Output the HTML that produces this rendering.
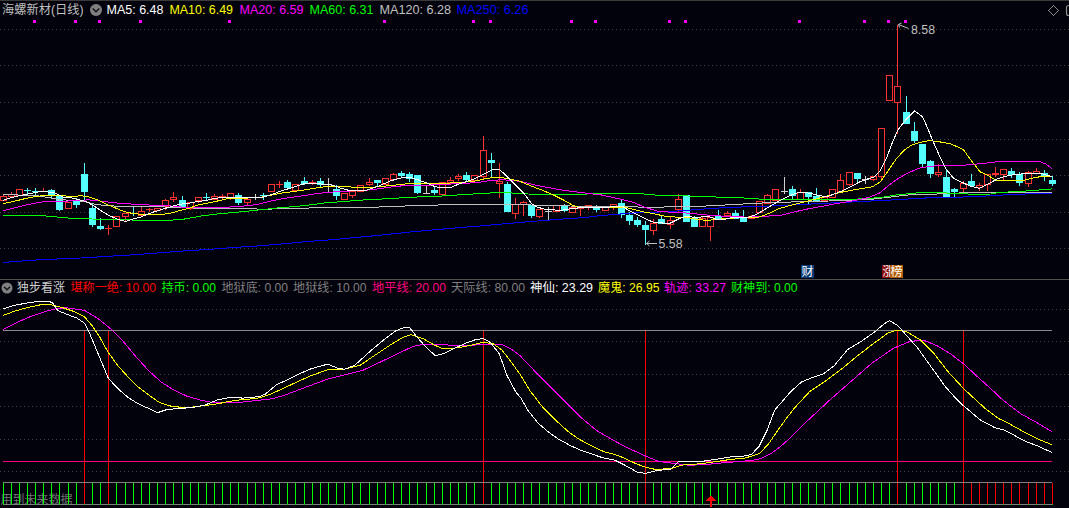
<!DOCTYPE html>
<html lang="zh-CN"><head><meta charset="utf-8"><title>海螺新材(日线)</title>
<style>html,body{margin:0;padding:0;background:#02020c;overflow:hidden}svg{display:block}text{font-family:"Liberation Sans","Noto Sans CJK SC",sans-serif;font-size:12px}.ma{fill:none;stroke-width:1;shape-rendering:crispEdges}.c{shape-rendering:crispEdges}</style></head><body>
<svg width="1069" height="508" viewBox="0 0 1069 508">
<rect width="1069" height="508" fill="#02020c"/>
<rect x="0" y="0" width="1069" height="1" fill="#3a3a3a" class="c"/>
<line x1="0" y1="29.5" x2="1069" y2="29.5" stroke="#404040" stroke-width="1" stroke-dasharray="1 3" class="c"/>
<line x1="0" y1="65.5" x2="1069" y2="65.5" stroke="#404040" stroke-width="1" stroke-dasharray="1 3" class="c"/>
<line x1="0" y1="102.5" x2="1069" y2="102.5" stroke="#404040" stroke-width="1" stroke-dasharray="1 3" class="c"/>
<line x1="0" y1="139.5" x2="1069" y2="139.5" stroke="#404040" stroke-width="1" stroke-dasharray="1 3" class="c"/>
<line x1="0" y1="175.5" x2="1069" y2="175.5" stroke="#404040" stroke-width="1" stroke-dasharray="1 3" class="c"/>
<line x1="0" y1="212.5" x2="1069" y2="212.5" stroke="#404040" stroke-width="1" stroke-dasharray="1 3" class="c"/>
<line x1="0" y1="248.5" x2="1069" y2="248.5" stroke="#404040" stroke-width="1" stroke-dasharray="1 3" class="c"/>
<line x1="0" y1="309.5" x2="1069" y2="309.5" stroke="#404040" stroke-width="1" stroke-dasharray="1 3" class="c"/>
<line x1="0" y1="341.5" x2="1069" y2="341.5" stroke="#404040" stroke-width="1" stroke-dasharray="1 3" class="c"/>
<line x1="0" y1="374.5" x2="1069" y2="374.5" stroke="#404040" stroke-width="1" stroke-dasharray="1 3" class="c"/>
<line x1="0" y1="406.5" x2="1069" y2="406.5" stroke="#404040" stroke-width="1" stroke-dasharray="1 3" class="c"/>
<line x1="0" y1="439.5" x2="1069" y2="439.5" stroke="#404040" stroke-width="1" stroke-dasharray="1 3" class="c"/>
<line x1="0" y1="471.5" x2="1069" y2="471.5" stroke="#404040" stroke-width="1" stroke-dasharray="1 3" class="c"/>
<rect x="0" y="279" width="1069" height="1" fill="#505050" class="c"/>
<rect x="33" y="20" width="3" height="3" fill="#ff00ff" class="c"/>
<rect x="74" y="20" width="3" height="3" fill="#ff00ff" class="c"/>
<rect x="98" y="20" width="3" height="3" fill="#ff00ff" class="c"/>
<rect x="139" y="20" width="3" height="3" fill="#ff00ff" class="c"/>
<rect x="228" y="20" width="3" height="3" fill="#ff00ff" class="c"/>
<rect x="383" y="20" width="3" height="3" fill="#ff00ff" class="c"/>
<rect x="472" y="20" width="3" height="3" fill="#ff00ff" class="c"/>
<rect x="489" y="20" width="3" height="3" fill="#ff00ff" class="c"/>
<rect x="570" y="20" width="3" height="3" fill="#ff00ff" class="c"/>
<rect x="594" y="20" width="3" height="3" fill="#ff00ff" class="c"/>
<rect x="668" y="20" width="3" height="3" fill="#ff00ff" class="c"/>
<rect x="684" y="20" width="3" height="3" fill="#ff00ff" class="c"/>
<rect x="798" y="20" width="3" height="3" fill="#ff00ff" class="c"/>
<rect x="863" y="20" width="3" height="3" fill="#ff00ff" class="c"/>
<rect x="887" y="20" width="3" height="3" fill="#ff00ff" class="c"/>
<rect x="904" y="20" width="3" height="3" fill="#ff00ff" class="c"/>
<g class="c">
<rect x="3" y="195" width="1" height="1" fill="#ff3232"/>
<rect x="0.5" y="196.5" width="6" height="4" fill="#02020c" stroke="#ff3232" stroke-width="1"/>
<rect x="11" y="192" width="1" height="2" fill="#ff3232"/>
<rect x="8.5" y="194.5" width="6" height="2" fill="#02020c" stroke="#ff3232" stroke-width="1"/>
<rect x="16.5" y="189.5" width="6" height="6" fill="#02020c" stroke="#ff3232" stroke-width="1"/>
<rect x="24" y="190" width="7" height="1" fill="#54ffff"/>
<rect x="27" y="188" width="1" height="6" fill="#54ffff"/>
<rect x="32" y="191" width="7" height="1" fill="#54ffff"/>
<rect x="35" y="188" width="1" height="9" fill="#54ffff"/>
<rect x="40" y="191" width="7" height="1" fill="#ff3232"/>
<rect x="43" y="188" width="1" height="4" fill="#ff3232"/>
<rect x="51" y="189" width="1" height="9" fill="#54ffff"/>
<rect x="48" y="190" width="7" height="5" fill="#54ffff"/>
<rect x="59" y="196" width="1" height="15" fill="#54ffff"/>
<rect x="56" y="196" width="7" height="14" fill="#54ffff"/>
<rect x="65.5" y="202.5" width="6" height="6" fill="#02020c" stroke="#ff3232" stroke-width="1"/>
<rect x="76" y="198" width="1" height="10" fill="#54ffff"/>
<rect x="73" y="201" width="7" height="4" fill="#54ffff"/>
<rect x="84" y="163" width="1" height="37" fill="#54ffff"/>
<rect x="81" y="174" width="7" height="18" fill="#54ffff"/>
<rect x="92" y="204" width="1" height="23" fill="#54ffff"/>
<rect x="89" y="208" width="7" height="17" fill="#54ffff"/>
<rect x="100" y="218" width="1" height="12" fill="#54ffff"/>
<rect x="97" y="226" width="7" height="3" fill="#54ffff"/>
<rect x="105" y="228" width="7" height="1" fill="#ff3232"/>
<rect x="108" y="225" width="1" height="10" fill="#ff3232"/>
<rect x="113.5" y="216.5" width="6" height="10" fill="#02020c" stroke="#ff3232" stroke-width="1"/>
<rect x="125" y="217" width="1" height="5" fill="#ff3232"/>
<rect x="122.5" y="213.5" width="6" height="3" fill="#02020c" stroke="#ff3232" stroke-width="1"/>
<rect x="130" y="213" width="7" height="1" fill="#54ffff"/>
<rect x="133" y="207" width="1" height="9" fill="#54ffff"/>
<rect x="141" y="207" width="1" height="4" fill="#ff3232"/>
<rect x="138.5" y="211.5" width="6" height="4" fill="#02020c" stroke="#ff3232" stroke-width="1"/>
<rect x="146" y="209" width="7" height="1" fill="#ff3232"/>
<rect x="149" y="208" width="1" height="4" fill="#ff3232"/>
<rect x="154.5" y="208.5" width="6" height="2" fill="#02020c" stroke="#ff3232" stroke-width="1"/>
<rect x="165" y="199" width="1" height="1" fill="#ff3232"/>
<rect x="165" y="207" width="1" height="3" fill="#ff3232"/>
<rect x="162.5" y="200.5" width="6" height="6" fill="#02020c" stroke="#ff3232" stroke-width="1"/>
<rect x="173" y="192" width="1" height="5" fill="#ff3232"/>
<rect x="173" y="200" width="1" height="2" fill="#ff3232"/>
<rect x="170.5" y="197.5" width="6" height="2" fill="#02020c" stroke="#ff3232" stroke-width="1"/>
<rect x="182" y="196" width="1" height="12" fill="#54ffff"/>
<rect x="179" y="200" width="7" height="7" fill="#54ffff"/>
<rect x="190" y="209" width="1" height="1" fill="#ff3232"/>
<rect x="187.5" y="202.5" width="6" height="6" fill="#02020c" stroke="#ff3232" stroke-width="1"/>
<rect x="198" y="201" width="1" height="2" fill="#ff3232"/>
<rect x="195.5" y="197.5" width="6" height="3" fill="#02020c" stroke="#ff3232" stroke-width="1"/>
<rect x="203" y="197" width="7" height="1" fill="#54ffff"/>
<rect x="206" y="193" width="1" height="7" fill="#54ffff"/>
<rect x="214" y="194" width="1" height="2" fill="#ff3232"/>
<rect x="211.5" y="196.5" width="6" height="3" fill="#02020c" stroke="#ff3232" stroke-width="1"/>
<rect x="222" y="194" width="1" height="2" fill="#ff3232"/>
<rect x="222" y="198" width="1" height="1" fill="#ff3232"/>
<rect x="219.5" y="196.5" width="6" height="1" fill="#02020c" stroke="#ff3232" stroke-width="1"/>
<rect x="230" y="198" width="1" height="2" fill="#ff3232"/>
<rect x="227.5" y="193.5" width="6" height="4" fill="#02020c" stroke="#ff3232" stroke-width="1"/>
<rect x="238" y="193" width="1" height="12" fill="#54ffff"/>
<rect x="235" y="195" width="7" height="8" fill="#54ffff"/>
<rect x="247" y="203" width="1" height="2" fill="#ff3232"/>
<rect x="244.5" y="199.5" width="6" height="3" fill="#02020c" stroke="#ff3232" stroke-width="1"/>
<rect x="252" y="197" width="7" height="1" fill="#d0d0d0"/>
<rect x="255" y="194" width="1" height="6" fill="#d0d0d0"/>
<rect x="260" y="195" width="7" height="1" fill="#54ffff"/>
<rect x="263" y="193" width="1" height="7" fill="#54ffff"/>
<rect x="268.5" y="184.5" width="6" height="7" fill="#02020c" stroke="#ff3232" stroke-width="1"/>
<rect x="276" y="184" width="7" height="1" fill="#ff3232"/>
<rect x="279" y="181" width="1" height="7" fill="#ff3232"/>
<rect x="287" y="180" width="1" height="10" fill="#54ffff"/>
<rect x="284" y="182" width="7" height="6" fill="#54ffff"/>
<rect x="292.5" y="184.5" width="6" height="6" fill="#02020c" stroke="#ff3232" stroke-width="1"/>
<rect x="304" y="177" width="1" height="8" fill="#54ffff"/>
<rect x="301" y="181" width="7" height="3" fill="#54ffff"/>
<rect x="309" y="182" width="7" height="1" fill="#ff3232"/>
<rect x="312" y="180" width="1" height="5" fill="#ff3232"/>
<rect x="320" y="178" width="1" height="9" fill="#54ffff"/>
<rect x="317" y="181" width="7" height="4" fill="#54ffff"/>
<rect x="325" y="184" width="7" height="1" fill="#d0d0d0"/>
<rect x="328" y="178" width="1" height="15" fill="#d0d0d0"/>
<rect x="336" y="185" width="1" height="15" fill="#54ffff"/>
<rect x="333" y="189" width="7" height="7" fill="#54ffff"/>
<rect x="341.5" y="193.5" width="6" height="6" fill="#02020c" stroke="#ff3232" stroke-width="1"/>
<rect x="352" y="196" width="1" height="2" fill="#ff3232"/>
<rect x="349.5" y="191.5" width="6" height="4" fill="#02020c" stroke="#ff3232" stroke-width="1"/>
<rect x="357.5" y="185.5" width="6" height="6" fill="#02020c" stroke="#ff3232" stroke-width="1"/>
<rect x="369" y="178" width="1" height="4" fill="#ff3232"/>
<rect x="369" y="185" width="1" height="1" fill="#ff3232"/>
<rect x="366.5" y="182.5" width="6" height="2" fill="#02020c" stroke="#ff3232" stroke-width="1"/>
<rect x="377" y="180" width="1" height="6" fill="#54ffff"/>
<rect x="374" y="180" width="7" height="3" fill="#54ffff"/>
<rect x="382.5" y="178.5" width="6" height="6" fill="#02020c" stroke="#ff3232" stroke-width="1"/>
<rect x="393" y="173" width="1" height="1" fill="#ff3232"/>
<rect x="390.5" y="174.5" width="6" height="5" fill="#02020c" stroke="#ff3232" stroke-width="1"/>
<rect x="401" y="171" width="1" height="7" fill="#54ffff"/>
<rect x="398" y="173" width="7" height="3" fill="#54ffff"/>
<rect x="409" y="172" width="1" height="10" fill="#54ffff"/>
<rect x="406" y="174" width="7" height="5" fill="#54ffff"/>
<rect x="417" y="175" width="1" height="19" fill="#54ffff"/>
<rect x="414" y="175" width="7" height="18" fill="#54ffff"/>
<rect x="423" y="193" width="7" height="1" fill="#d0d0d0"/>
<rect x="426" y="185" width="1" height="9" fill="#d0d0d0"/>
<rect x="434" y="186" width="1" height="9" fill="#54ffff"/>
<rect x="431" y="190" width="7" height="3" fill="#54ffff"/>
<rect x="439.5" y="182.5" width="6" height="12" fill="#02020c" stroke="#ff3232" stroke-width="1"/>
<rect x="450" y="177" width="1" height="3" fill="#ff3232"/>
<rect x="450" y="183" width="1" height="2" fill="#ff3232"/>
<rect x="447.5" y="180.5" width="6" height="2" fill="#02020c" stroke="#ff3232" stroke-width="1"/>
<rect x="458" y="174" width="1" height="2" fill="#ff3232"/>
<rect x="458" y="179" width="1" height="2" fill="#ff3232"/>
<rect x="455.5" y="176.5" width="6" height="2" fill="#02020c" stroke="#ff3232" stroke-width="1"/>
<rect x="466" y="172" width="1" height="10" fill="#54ffff"/>
<rect x="463" y="175" width="7" height="5" fill="#54ffff"/>
<rect x="474" y="181" width="1" height="2" fill="#ff3232"/>
<rect x="471.5" y="175.5" width="6" height="5" fill="#02020c" stroke="#ff3232" stroke-width="1"/>
<rect x="483" y="136" width="1" height="14" fill="#ff3232"/>
<rect x="483" y="177" width="1" height="3" fill="#ff3232"/>
<rect x="480.5" y="150.5" width="6" height="26" fill="#02020c" stroke="#ff3232" stroke-width="1"/>
<rect x="491" y="153" width="1" height="24" fill="#54ffff"/>
<rect x="488" y="160" width="7" height="3" fill="#54ffff"/>
<rect x="499" y="163" width="1" height="18" fill="#ff3232"/>
<rect x="499" y="184" width="1" height="14" fill="#ff3232"/>
<rect x="496.5" y="181.5" width="6" height="2" fill="#02020c" stroke="#ff3232" stroke-width="1"/>
<rect x="507" y="182" width="1" height="30" fill="#54ffff"/>
<rect x="504" y="184" width="7" height="28" fill="#54ffff"/>
<rect x="515" y="198" width="1" height="6" fill="#ff3232"/>
<rect x="515" y="214" width="1" height="5" fill="#ff3232"/>
<rect x="512.5" y="204.5" width="6" height="9" fill="#02020c" stroke="#ff3232" stroke-width="1"/>
<rect x="523" y="201" width="1" height="1" fill="#ff3232"/>
<rect x="523" y="205" width="1" height="11" fill="#ff3232"/>
<rect x="520.5" y="202.5" width="6" height="2" fill="#02020c" stroke="#ff3232" stroke-width="1"/>
<rect x="531" y="205" width="1" height="13" fill="#54ffff"/>
<rect x="528" y="205" width="7" height="11" fill="#54ffff"/>
<rect x="539" y="217" width="1" height="1" fill="#ff3232"/>
<rect x="536.5" y="209.5" width="6" height="7" fill="#02020c" stroke="#ff3232" stroke-width="1"/>
<rect x="545" y="211" width="7" height="1" fill="#d0d0d0"/>
<rect x="548" y="207" width="1" height="13" fill="#d0d0d0"/>
<rect x="553.5" y="205.5" width="6" height="6" fill="#02020c" stroke="#ff3232" stroke-width="1"/>
<rect x="564" y="204" width="1" height="8" fill="#54ffff"/>
<rect x="561" y="205" width="7" height="6" fill="#54ffff"/>
<rect x="569.5" y="207.5" width="6" height="5" fill="#02020c" stroke="#ff3232" stroke-width="1"/>
<rect x="577" y="208" width="7" height="1" fill="#ff3232"/>
<rect x="580" y="208" width="1" height="8" fill="#ff3232"/>
<rect x="588" y="208" width="1" height="2" fill="#ff3232"/>
<rect x="585.5" y="205.5" width="6" height="2" fill="#02020c" stroke="#ff3232" stroke-width="1"/>
<rect x="596" y="205" width="1" height="7" fill="#54ffff"/>
<rect x="593" y="207" width="7" height="3" fill="#54ffff"/>
<rect x="602.5" y="206.5" width="6" height="4" fill="#02020c" stroke="#ff3232" stroke-width="1"/>
<rect x="613" y="207" width="1" height="3" fill="#ff3232"/>
<rect x="610.5" y="204.5" width="6" height="2" fill="#02020c" stroke="#ff3232" stroke-width="1"/>
<rect x="621" y="199" width="1" height="19" fill="#54ffff"/>
<rect x="618" y="203" width="7" height="12" fill="#54ffff"/>
<rect x="629" y="212" width="1" height="13" fill="#54ffff"/>
<rect x="626" y="215" width="7" height="6" fill="#54ffff"/>
<rect x="637" y="217" width="1" height="10" fill="#54ffff"/>
<rect x="634" y="220" width="7" height="5" fill="#54ffff"/>
<rect x="645" y="221" width="1" height="24" fill="#54ffff"/>
<rect x="642" y="225" width="7" height="5" fill="#54ffff"/>
<rect x="653" y="219" width="1" height="4" fill="#ff3232"/>
<rect x="653" y="231" width="1" height="4" fill="#ff3232"/>
<rect x="650.5" y="223.5" width="6" height="7" fill="#02020c" stroke="#ff3232" stroke-width="1"/>
<rect x="661" y="216" width="1" height="8" fill="#54ffff"/>
<rect x="658" y="219" width="7" height="5" fill="#54ffff"/>
<rect x="670" y="217" width="1" height="3" fill="#ff3232"/>
<rect x="670" y="225" width="1" height="4" fill="#ff3232"/>
<rect x="667.5" y="220.5" width="6" height="4" fill="#02020c" stroke="#ff3232" stroke-width="1"/>
<rect x="678" y="194" width="1" height="5" fill="#ff3232"/>
<rect x="678" y="210" width="1" height="3" fill="#ff3232"/>
<rect x="675.5" y="199.5" width="6" height="10" fill="#02020c" stroke="#ff3232" stroke-width="1"/>
<rect x="686" y="195" width="1" height="27" fill="#54ffff"/>
<rect x="683" y="195" width="7" height="27" fill="#54ffff"/>
<rect x="694" y="216" width="1" height="11" fill="#54ffff"/>
<rect x="691" y="218" width="7" height="9" fill="#54ffff"/>
<rect x="702" y="216" width="1" height="2" fill="#ff3232"/>
<rect x="699.5" y="218.5" width="6" height="8" fill="#02020c" stroke="#ff3232" stroke-width="1"/>
<rect x="710" y="227" width="1" height="14" fill="#ff3232"/>
<rect x="707.5" y="217.5" width="6" height="9" fill="#02020c" stroke="#ff3232" stroke-width="1"/>
<rect x="718" y="210" width="1" height="9" fill="#54ffff"/>
<rect x="715" y="216" width="7" height="3" fill="#54ffff"/>
<rect x="727" y="211" width="1" height="2" fill="#ff3232"/>
<rect x="724.5" y="213.5" width="6" height="2" fill="#02020c" stroke="#ff3232" stroke-width="1"/>
<rect x="735" y="210" width="1" height="9" fill="#54ffff"/>
<rect x="732" y="213" width="7" height="6" fill="#54ffff"/>
<rect x="743" y="210" width="1" height="12" fill="#54ffff"/>
<rect x="740" y="217" width="7" height="5" fill="#54ffff"/>
<rect x="751" y="215" width="1" height="1" fill="#ff3232"/>
<rect x="748.5" y="216.5" width="6" height="2" fill="#02020c" stroke="#ff3232" stroke-width="1"/>
<rect x="756.5" y="201.5" width="6" height="11" fill="#02020c" stroke="#ff3232" stroke-width="1"/>
<rect x="767" y="194" width="1" height="1" fill="#ff3232"/>
<rect x="764.5" y="195.5" width="6" height="8" fill="#02020c" stroke="#ff3232" stroke-width="1"/>
<rect x="772.5" y="189.5" width="6" height="11" fill="#02020c" stroke="#ff3232" stroke-width="1"/>
<rect x="781" y="191" width="7" height="1" fill="#d0d0d0"/>
<rect x="784" y="177" width="1" height="17" fill="#d0d0d0"/>
<rect x="792" y="186" width="1" height="13" fill="#54ffff"/>
<rect x="789" y="189" width="7" height="7" fill="#54ffff"/>
<rect x="800" y="189" width="1" height="3" fill="#ff3232"/>
<rect x="797.5" y="192.5" width="6" height="7" fill="#02020c" stroke="#ff3232" stroke-width="1"/>
<rect x="808" y="192" width="1" height="13" fill="#54ffff"/>
<rect x="805" y="192" width="7" height="5" fill="#54ffff"/>
<rect x="816" y="188" width="1" height="13" fill="#54ffff"/>
<rect x="813" y="196" width="7" height="5" fill="#54ffff"/>
<rect x="821.5" y="197.5" width="6" height="3" fill="#02020c" stroke="#ff3232" stroke-width="1"/>
<rect x="829.5" y="189.5" width="6" height="8" fill="#02020c" stroke="#ff3232" stroke-width="1"/>
<rect x="840" y="174" width="1" height="6" fill="#ff3232"/>
<rect x="837.5" y="180.5" width="6" height="11" fill="#02020c" stroke="#ff3232" stroke-width="1"/>
<rect x="849" y="185" width="1" height="1" fill="#ff3232"/>
<rect x="846.5" y="172.5" width="6" height="12" fill="#02020c" stroke="#ff3232" stroke-width="1"/>
<rect x="857" y="173" width="1" height="11" fill="#54ffff"/>
<rect x="854" y="173" width="7" height="6" fill="#54ffff"/>
<rect x="862" y="179" width="7" height="1" fill="#d0d0d0"/>
<rect x="865" y="176" width="1" height="8" fill="#d0d0d0"/>
<rect x="873" y="180" width="1" height="1" fill="#ff3232"/>
<rect x="870.5" y="176.5" width="6" height="3" fill="#02020c" stroke="#ff3232" stroke-width="1"/>
<rect x="881" y="177" width="1" height="3" fill="#ff3232"/>
<rect x="878.5" y="128.5" width="6" height="48" fill="#02020c" stroke="#ff3232" stroke-width="1"/>
<rect x="886.5" y="75.5" width="6" height="25" fill="#02020c" stroke="#ff3232" stroke-width="1"/>
<rect x="897" y="25" width="1" height="61" fill="#ff3232"/>
<rect x="897" y="103" width="1" height="31" fill="#ff3232"/>
<rect x="894.5" y="86.5" width="6" height="16" fill="#02020c" stroke="#ff3232" stroke-width="1"/>
<rect x="906" y="96" width="1" height="28" fill="#54ffff"/>
<rect x="903" y="112" width="7" height="12" fill="#54ffff"/>
<rect x="914" y="122" width="1" height="21" fill="#54ffff"/>
<rect x="911" y="131" width="7" height="10" fill="#54ffff"/>
<rect x="922" y="144" width="1" height="24" fill="#54ffff"/>
<rect x="919" y="144" width="7" height="20" fill="#54ffff"/>
<rect x="930" y="160" width="1" height="18" fill="#54ffff"/>
<rect x="927" y="161" width="7" height="13" fill="#54ffff"/>
<rect x="938" y="164" width="1" height="8" fill="#ff3232"/>
<rect x="938" y="175" width="1" height="2" fill="#ff3232"/>
<rect x="935.5" y="172.5" width="6" height="2" fill="#02020c" stroke="#ff3232" stroke-width="1"/>
<rect x="946" y="170" width="1" height="28" fill="#54ffff"/>
<rect x="943" y="177" width="7" height="21" fill="#54ffff"/>
<rect x="954" y="188" width="1" height="9" fill="#54ffff"/>
<rect x="951" y="189" width="7" height="3" fill="#54ffff"/>
<rect x="963" y="181" width="1" height="2" fill="#ff3232"/>
<rect x="963" y="189" width="1" height="4" fill="#ff3232"/>
<rect x="960.5" y="183.5" width="6" height="5" fill="#02020c" stroke="#ff3232" stroke-width="1"/>
<rect x="971" y="174" width="1" height="12" fill="#54ffff"/>
<rect x="968" y="181" width="7" height="5" fill="#54ffff"/>
<rect x="979" y="183" width="1" height="2" fill="#ff3232"/>
<rect x="979" y="188" width="1" height="3" fill="#ff3232"/>
<rect x="976.5" y="185.5" width="6" height="2" fill="#02020c" stroke="#ff3232" stroke-width="1"/>
<rect x="987" y="185" width="1" height="6" fill="#ff3232"/>
<rect x="984.5" y="174.5" width="6" height="10" fill="#02020c" stroke="#ff3232" stroke-width="1"/>
<rect x="995" y="167" width="1" height="6" fill="#ff3232"/>
<rect x="995" y="175" width="1" height="2" fill="#ff3232"/>
<rect x="992.5" y="173.5" width="6" height="1" fill="#02020c" stroke="#ff3232" stroke-width="1"/>
<rect x="1003" y="175" width="1" height="6" fill="#ff3232"/>
<rect x="1000.5" y="169.5" width="6" height="5" fill="#02020c" stroke="#ff3232" stroke-width="1"/>
<rect x="1011" y="168" width="1" height="10" fill="#54ffff"/>
<rect x="1008" y="171" width="7" height="4" fill="#54ffff"/>
<rect x="1019" y="172" width="1" height="14" fill="#54ffff"/>
<rect x="1016" y="174" width="7" height="9" fill="#54ffff"/>
<rect x="1028" y="171" width="1" height="1" fill="#ff3232"/>
<rect x="1028" y="184" width="1" height="3" fill="#ff3232"/>
<rect x="1025.5" y="172.5" width="6" height="11" fill="#02020c" stroke="#ff3232" stroke-width="1"/>
<rect x="1036" y="168" width="1" height="3" fill="#ff3232"/>
<rect x="1033.5" y="171.5" width="6" height="2" fill="#02020c" stroke="#ff3232" stroke-width="1"/>
<rect x="1044" y="170" width="1" height="11" fill="#54ffff"/>
<rect x="1041" y="173" width="7" height="4" fill="#54ffff"/>
<rect x="1052" y="176" width="1" height="10" fill="#54ffff"/>
<rect x="1049" y="180" width="7" height="4" fill="#54ffff"/>
</g>
<polyline class="ma" stroke="#0000ff" points="3.4,262.4 40.4,259.7 80.8,258.0 134.7,254.7 188.6,250.6 209.4,249.4 235.0,247.4 258.6,245.9 282.2,243.9 307.8,241.5 333.4,239.6 359.0,237.2 380.0,235.2 410.0,232.0 438.9,229.4 462.5,227.4 486.1,225.5 507.8,223.5 531.4,221.5 555.0,219.6 570.0,218.5 583.8,217.7 599.5,215.7 619.2,214.1 636.9,212.8 664.5,211.8 680.2,210.8 696.0,209.6 715.7,208.2 733.4,207.2 753.0,206.7 770.0,206.0 809.4,204.1 848.7,202.1 888.1,200.2 929.0,197.8 958.0,197.2 982.7,196.2 1006.2,194.8 1032.3,193.7 1052.0,193.0"/>
<polyline class="ma" stroke="#c0c0c0" points="3.3,194.1 13.0,194.7 26.0,195.5 39.0,196.0 52.4,198.3 62.9,199.9 73.3,200.3 85.0,201.6 94.3,204.2 104.8,205.5 117.9,206.2 140.0,206.5 170.0,207.1 211.3,208.7 248.7,208.7 268.4,209.4 276.3,208.5 307.8,208.5 309.8,207.7 372.8,207.7 380.0,206.9 389.7,206.4 413.3,205.8 444.8,204.8 507.8,204.4 570.0,206.0 629.0,206.9 652.7,207.2 696.0,206.5 727.5,204.9 755.0,203.3 780.0,202.3 829.0,201.0 868.4,199.6 907.8,195.0 929.0,194.4 959.3,193.0 1052.0,192.4"/>
<polyline class="ma" stroke="#00ff00" points="3.3,215.4 39.3,215.4 57.0,217.0 73.0,218.5 92.0,219.0 112.6,219.3 140.0,220.3 170.0,220.3 185.7,218.9 201.5,215.9 217.2,214.0 233.0,212.6 248.7,211.0 264.5,209.4 280.2,207.7 296.0,206.5 311.7,204.7 327.5,202.6 343.2,201.6 359.0,200.2 375.0,199.5 389.7,198.5 419.2,196.9 444.8,195.9 462.5,194.6 480.2,193.6 496.0,192.6 511.7,193.0 527.5,194.0 570.0,194.4 609.4,193.5 638.9,193.5 658.6,195.4 688.1,196.0 715.7,197.0 741.3,197.8 759.0,199.0 775.0,199.7 809.4,199.6 848.7,199.6 880.2,197.6 896.0,195.0 919.6,192.7 947.2,193.0 975.9,194.4 991.0,194.0 999.3,192.4 1014.4,191.7 1031.0,190.7 1047.5,189.3 1052.0,188.9"/>
<polyline class="ma" stroke="#ff00ff" points="3.3,210.8 13.0,208.2 23.6,205.5 34.0,203.3 44.5,201.6 55.0,201.0 68.0,201.0 78.6,200.3 89.0,199.9 99.5,201.0 110.0,202.3 120.5,203.3 131.0,204.0 140.0,204.5 155.0,205.3 170.0,205.9 181.8,207.1 193.6,207.1 209.4,207.7 229.0,207.1 248.7,205.7 258.6,204.1 268.4,201.6 280.2,199.2 292.0,197.2 303.9,195.7 315.7,193.7 327.5,192.3 339.3,191.7 351.1,190.9 362.9,190.4 374.7,189.4 389.7,187.1 409.4,185.1 429.0,185.1 448.7,184.1 468.4,183.1 480.2,182.2 492.0,180.2 503.9,179.8 519.6,181.2 535.4,185.1 551.1,188.1 566.9,190.8 585.7,193.1 601.5,195.0 617.2,198.4 633.0,202.3 644.8,207.2 658.6,211.6 672.4,212.2 688.1,213.1 707.8,215.1 727.5,216.5 747.2,217.1 766.9,216.1 780.0,215.4 790.0,213.0 805.4,209.4 821.2,206.5 836.9,203.5 852.7,200.9 868.4,197.6 880.2,192.7 888.1,185.8 896.0,179.9 907.8,173.0 919.6,168.1 931.4,166.1 949.7,165.5 966.2,165.0 984.0,163.4 999.3,161.4 1039.2,161.4 1046.0,164.0 1052.0,168.7"/>
<polyline class="ma" stroke="#ffff00" points="3.3,203.6 13.0,201.6 23.6,199.0 34.0,196.8 44.5,195.5 55.0,195.5 65.5,196.0 73.3,196.4 81.2,195.7 89.0,197.0 96.9,199.6 104.8,203.6 112.6,206.8 120.5,210.1 128.3,212.7 140.0,214.3 149.6,214.2 160.0,214.6 170.0,213.4 179.8,210.6 189.7,208.1 197.6,205.1 209.4,202.8 221.2,200.2 229.0,198.2 238.9,198.2 258.6,197.8 268.4,195.7 280.2,193.3 292.0,191.7 303.9,190.0 315.7,188.0 327.5,186.4 337.3,186.4 347.2,186.8 359.0,187.4 370.8,187.4 389.7,185.7 409.4,183.5 429.0,183.1 448.7,183.1 464.5,182.2 476.3,180.8 488.1,178.2 498.0,177.2 507.8,178.6 519.6,181.2 531.4,186.1 543.2,190.6 552.7,194.6 563.2,199.8 572.4,205.1 580.2,207.7 593.3,207.4 611.7,207.4 624.8,207.0 633.9,209.6 645.7,212.3 652.7,213.5 664.5,216.1 676.3,217.1 688.1,217.7 698.0,219.6 707.8,220.4 719.6,219.1 731.4,218.1 747.2,217.5 759.0,217.1 768.8,213.5 777.9,209.0 793.6,204.5 809.4,200.6 825.1,196.6 838.9,192.7 854.6,189.7 872.4,186.8 880.2,181.9 888.1,171.0 896.0,159.2 903.9,150.4 911.7,145.0 919.6,142.5 929.0,140.7 937.3,141.4 951.0,144.0 963.4,149.6 970.3,159.3 980.0,171.7 988.3,175.8 996.5,180.4 1022.7,180.7 1033.7,177.9 1043.4,176.1 1052.0,176.5"/>
<polyline class="ma" stroke="#ffffff" points="3.3,200.3 10.5,197.7 18.3,196.0 26.2,194.4 34.0,192.8 40.6,191.5 47.0,191.8 55.0,193.0 62.9,197.0 70.7,197.7 78.6,199.6 86.4,201.6 94.3,206.2 102.0,211.4 110.0,216.0 117.9,219.3 125.7,221.6 132.3,219.3 140.0,217.3 146.0,214.8 153.5,212.0 163.4,209.0 172.0,206.3 179.8,204.3 189.7,203.1 197.6,201.6 207.4,200.2 215.3,198.2 229.0,197.2 238.9,197.8 256.6,197.8 264.5,196.9 272.4,194.3 280.2,191.3 288.1,188.8 296.0,186.4 303.9,183.9 311.7,183.1 319.6,183.9 327.5,184.4 333.4,185.4 341.3,188.4 349.1,190.4 357.0,190.7 366.9,190.0 374.7,187.4 379.8,185.6 389.7,181.2 399.5,178.2 409.4,177.2 419.2,180.2 427.1,183.1 435.0,186.7 442.8,187.7 450.7,187.7 458.6,184.1 466.5,181.6 474.3,178.8 483.2,174.3 492.0,170.0 499.5,169.4 507.8,177.2 515.7,185.1 523.5,193.0 531.8,203.8 537.0,207.0 546.2,209.6 561.9,210.3 572.4,208.3 582.9,207.7 603.8,207.7 611.7,206.8 623.5,207.0 628.7,210.3 637.9,214.9 645.7,218.8 651.0,221.2 654.6,222.6 662.5,223.0 670.4,223.0 678.3,219.1 686.1,216.1 696.0,217.7 707.8,216.1 715.7,219.1 721.6,220.0 731.4,217.7 739.3,217.1 749.1,217.1 757.0,214.1 766.9,208.2 774.7,203.5 779.8,200.6 789.7,195.6 799.5,192.3 809.4,193.1 819.2,195.6 827.1,196.6 835.0,193.7 842.8,190.7 850.7,186.8 858.6,182.4 866.5,179.3 874.3,176.9 880.2,171.0 886.1,159.2 892.0,143.5 898.0,129.7 905.8,119.8 914.7,111.0 922.6,116.9 927.5,127.7 932.4,140.0 938.6,153.8 945.5,168.2 953.8,178.6 963.4,183.0 970.3,186.2 979.3,188.2 988.3,184.0 997.9,178.6 1007.5,175.8 1017.2,174.2 1025.5,173.8 1039.2,173.0 1046.0,175.0 1052.0,176.5"/>
<g stroke="#c0c0c0" stroke-width="1" fill="none"><path d="M898.5 24.5 L908.5 28.5 M898.5 24.5 l3 -1.5 M898.5 24.5 l1 3"/><path d="M646.5 243.5 H657 M646.5 243.5 l3 -2.5 M646.5 243.5 l3 2.5"/></g>
<text x="911" y="34" fill="#c0c0c0" font-size="12.5" textLength="24" lengthAdjust="spacingAndGlyphs">8.58</text>
<text x="658.5" y="248" fill="#c0c0c0" font-size="12.5" textLength="24" lengthAdjust="spacingAndGlyphs">5.58</text>
<text x="2.0" y="14.2" fill="#c0c0c0" textLength="81.5" lengthAdjust="spacingAndGlyphs">海螺新材(日线)</text>
<circle cx="96" cy="10" r="6" fill="#808080"/><path d="M92.7 8.6 L96 11.8 L99.3 8.6" fill="none" stroke="#101018" stroke-width="1.4"/>
<text x="106.5" y="14.2" fill="#ffffff" textLength="57.0" lengthAdjust="spacingAndGlyphs">MA5: 6.48</text>
<text x="169.5" y="14.2" fill="#ffff00" textLength="63.5" lengthAdjust="spacingAndGlyphs">MA10: 6.49</text>
<text x="239.5" y="14.2" fill="#ff00ff" textLength="64.0" lengthAdjust="spacingAndGlyphs">MA20: 6.59</text>
<text x="309.5" y="14.2" fill="#00ff00" textLength="64.0" lengthAdjust="spacingAndGlyphs">MA60: 6.31</text>
<text x="379.5" y="14.2" fill="#c0c0c0" textLength="71.5" lengthAdjust="spacingAndGlyphs">MA120: 6.28</text>
<text x="456.5" y="14.2" fill="#0000ff" textLength="72.0" lengthAdjust="spacingAndGlyphs">MA250: 6.26</text>
<path d="M1053.5 5.5 L1058.5 10.5 L1053.5 15.5 L1048.5 10.5 Z" fill="none" stroke="#8a8a8a" stroke-width="1" class="c"/>
<rect x="1066.5" y="5.5" width="10" height="10" rx="2" fill="none" stroke="#909090" stroke-width="1.2"/>
<rect x="801" y="265" width="13" height="13" fill="#0a3c78" class="c"/>
<text x="801.5" y="276" fill="#ffffff" font-size="12">财</text>
<rect x="882" y="265" width="13" height="13" fill="#8b0a0a" class="c"/>
<text x="882.5" y="276" fill="#ffffff" font-size="12">涨</text>
<rect x="890" y="265" width="13" height="13" fill="#b4600a" class="c"/>
<text x="890.5" y="276" fill="#ffffff" font-size="12">榜</text>
<rect x="3" y="330" width="1049" height="1" fill="#888888" class="c"/>
<rect x="3" y="461" width="1049" height="1" fill="#ff0080" class="c"/>
<text x="0.5" y="503.5" fill="#707070" textLength="72.0" lengthAdjust="spacingAndGlyphs">用到未来数据</text>
<g class="c">
<rect x="3" y="483" width="1" height="22" fill="#00ff00"/>
<rect x="11" y="483" width="1" height="22" fill="#00ff00"/>
<rect x="19" y="483" width="1" height="22" fill="#00ff00"/>
<rect x="27" y="483" width="1" height="22" fill="#00ff00"/>
<rect x="35" y="483" width="1" height="22" fill="#00ff00"/>
<rect x="43" y="483" width="1" height="22" fill="#00ff00"/>
<rect x="51" y="483" width="1" height="22" fill="#00ff00"/>
<rect x="59" y="483" width="1" height="22" fill="#00ff00"/>
<rect x="68" y="483" width="1" height="22" fill="#00ff00"/>
<rect x="76" y="483" width="1" height="22" fill="#00ff00"/>
<rect x="84" y="483" width="1" height="22" fill="#ff0000"/>
<rect x="92" y="483" width="1" height="22" fill="#00ff00"/>
<rect x="100" y="483" width="1" height="22" fill="#00ff00"/>
<rect x="108" y="483" width="1" height="22" fill="#ff0000"/>
<rect x="116" y="483" width="1" height="22" fill="#00ff00"/>
<rect x="125" y="483" width="1" height="22" fill="#00ff00"/>
<rect x="133" y="483" width="1" height="22" fill="#00ff00"/>
<rect x="141" y="483" width="1" height="22" fill="#00ff00"/>
<rect x="149" y="483" width="1" height="22" fill="#00ff00"/>
<rect x="157" y="483" width="1" height="22" fill="#00ff00"/>
<rect x="165" y="483" width="1" height="22" fill="#00ff00"/>
<rect x="173" y="483" width="1" height="22" fill="#00ff00"/>
<rect x="182" y="483" width="1" height="22" fill="#00ff00"/>
<rect x="190" y="483" width="1" height="22" fill="#00ff00"/>
<rect x="198" y="483" width="1" height="22" fill="#00ff00"/>
<rect x="206" y="483" width="1" height="22" fill="#00ff00"/>
<rect x="214" y="483" width="1" height="22" fill="#00ff00"/>
<rect x="222" y="483" width="1" height="22" fill="#00ff00"/>
<rect x="230" y="483" width="1" height="22" fill="#00ff00"/>
<rect x="238" y="483" width="1" height="22" fill="#00ff00"/>
<rect x="247" y="483" width="1" height="22" fill="#00ff00"/>
<rect x="255" y="483" width="1" height="22" fill="#00ff00"/>
<rect x="263" y="483" width="1" height="22" fill="#00ff00"/>
<rect x="271" y="483" width="1" height="22" fill="#00ff00"/>
<rect x="279" y="483" width="1" height="22" fill="#00ff00"/>
<rect x="287" y="483" width="1" height="22" fill="#00ff00"/>
<rect x="295" y="483" width="1" height="22" fill="#00ff00"/>
<rect x="304" y="483" width="1" height="22" fill="#00ff00"/>
<rect x="312" y="483" width="1" height="22" fill="#00ff00"/>
<rect x="320" y="483" width="1" height="22" fill="#00ff00"/>
<rect x="328" y="483" width="1" height="22" fill="#00ff00"/>
<rect x="336" y="483" width="1" height="22" fill="#00ff00"/>
<rect x="344" y="483" width="1" height="22" fill="#00ff00"/>
<rect x="352" y="483" width="1" height="22" fill="#00ff00"/>
<rect x="360" y="483" width="1" height="22" fill="#00ff00"/>
<rect x="369" y="483" width="1" height="22" fill="#00ff00"/>
<rect x="377" y="483" width="1" height="22" fill="#00ff00"/>
<rect x="385" y="483" width="1" height="22" fill="#00ff00"/>
<rect x="393" y="483" width="1" height="22" fill="#00ff00"/>
<rect x="401" y="483" width="1" height="22" fill="#00ff00"/>
<rect x="409" y="483" width="1" height="22" fill="#00ff00"/>
<rect x="417" y="483" width="1" height="22" fill="#00ff00"/>
<rect x="426" y="483" width="1" height="22" fill="#00ff00"/>
<rect x="434" y="483" width="1" height="22" fill="#00ff00"/>
<rect x="442" y="483" width="1" height="22" fill="#00ff00"/>
<rect x="450" y="483" width="1" height="22" fill="#00ff00"/>
<rect x="458" y="483" width="1" height="22" fill="#00ff00"/>
<rect x="466" y="483" width="1" height="22" fill="#00ff00"/>
<rect x="474" y="483" width="1" height="22" fill="#00ff00"/>
<rect x="483" y="483" width="1" height="22" fill="#ff0000"/>
<rect x="491" y="483" width="1" height="22" fill="#00ff00"/>
<rect x="499" y="483" width="1" height="22" fill="#00ff00"/>
<rect x="507" y="483" width="1" height="22" fill="#00ff00"/>
<rect x="515" y="483" width="1" height="22" fill="#00ff00"/>
<rect x="523" y="483" width="1" height="22" fill="#00ff00"/>
<rect x="531" y="483" width="1" height="22" fill="#00ff00"/>
<rect x="539" y="483" width="1" height="22" fill="#00ff00"/>
<rect x="548" y="483" width="1" height="22" fill="#00ff00"/>
<rect x="556" y="483" width="1" height="22" fill="#00ff00"/>
<rect x="564" y="483" width="1" height="22" fill="#00ff00"/>
<rect x="572" y="483" width="1" height="22" fill="#00ff00"/>
<rect x="580" y="483" width="1" height="22" fill="#00ff00"/>
<rect x="588" y="483" width="1" height="22" fill="#00ff00"/>
<rect x="596" y="483" width="1" height="22" fill="#00ff00"/>
<rect x="605" y="483" width="1" height="22" fill="#00ff00"/>
<rect x="613" y="483" width="1" height="22" fill="#00ff00"/>
<rect x="621" y="483" width="1" height="22" fill="#00ff00"/>
<rect x="629" y="483" width="1" height="22" fill="#00ff00"/>
<rect x="637" y="483" width="1" height="22" fill="#00ff00"/>
<rect x="645" y="483" width="1" height="22" fill="#ff0000"/>
<rect x="653" y="483" width="1" height="22" fill="#00ff00"/>
<rect x="661" y="483" width="1" height="22" fill="#00ff00"/>
<rect x="670" y="483" width="1" height="22" fill="#00ff00"/>
<rect x="678" y="483" width="1" height="22" fill="#00ff00"/>
<rect x="686" y="483" width="1" height="22" fill="#00ff00"/>
<rect x="694" y="483" width="1" height="22" fill="#00ff00"/>
<rect x="702" y="483" width="1" height="22" fill="#00ff00"/>
<rect x="710" y="483" width="1" height="22" fill="#00ff00"/>
<rect x="718" y="483" width="1" height="22" fill="#00ff00"/>
<rect x="727" y="483" width="1" height="22" fill="#00ff00"/>
<rect x="735" y="483" width="1" height="22" fill="#00ff00"/>
<rect x="743" y="483" width="1" height="22" fill="#00ff00"/>
<rect x="751" y="483" width="1" height="22" fill="#00ff00"/>
<rect x="759" y="483" width="1" height="22" fill="#00ff00"/>
<rect x="767" y="483" width="1" height="22" fill="#00ff00"/>
<rect x="775" y="483" width="1" height="22" fill="#00ff00"/>
<rect x="784" y="483" width="1" height="22" fill="#00ff00"/>
<rect x="792" y="483" width="1" height="22" fill="#00ff00"/>
<rect x="800" y="483" width="1" height="22" fill="#00ff00"/>
<rect x="808" y="483" width="1" height="22" fill="#00ff00"/>
<rect x="816" y="483" width="1" height="22" fill="#00ff00"/>
<rect x="824" y="483" width="1" height="22" fill="#00ff00"/>
<rect x="832" y="483" width="1" height="22" fill="#00ff00"/>
<rect x="840" y="483" width="1" height="22" fill="#00ff00"/>
<rect x="849" y="483" width="1" height="22" fill="#00ff00"/>
<rect x="857" y="483" width="1" height="22" fill="#00ff00"/>
<rect x="865" y="483" width="1" height="22" fill="#00ff00"/>
<rect x="873" y="483" width="1" height="22" fill="#00ff00"/>
<rect x="881" y="483" width="1" height="22" fill="#00ff00"/>
<rect x="889" y="483" width="1" height="22" fill="#00ff00"/>
<rect x="897" y="483" width="1" height="22" fill="#ff0000"/>
<rect x="906" y="483" width="1" height="22" fill="#00ff00"/>
<rect x="914" y="483" width="1" height="22" fill="#00ff00"/>
<rect x="922" y="483" width="1" height="22" fill="#00ff00"/>
<rect x="930" y="483" width="1" height="22" fill="#00ff00"/>
<rect x="938" y="483" width="1" height="22" fill="#00ff00"/>
<rect x="946" y="483" width="1" height="22" fill="#00ff00"/>
<rect x="954" y="483" width="1" height="22" fill="#00ff00"/>
<rect x="963" y="483" width="1" height="22" fill="#ff0000"/>
<rect x="971" y="483" width="1" height="22" fill="#ff0000"/>
<rect x="979" y="483" width="1" height="22" fill="#ff0000"/>
<rect x="987" y="483" width="1" height="22" fill="#ff0000"/>
<rect x="995" y="483" width="1" height="22" fill="#ff0000"/>
<rect x="1003" y="483" width="1" height="22" fill="#ff0000"/>
<rect x="1011" y="483" width="1" height="22" fill="#ff0000"/>
<rect x="1019" y="483" width="1" height="22" fill="#ff0000"/>
<rect x="1028" y="483" width="1" height="22" fill="#ff0000"/>
<rect x="1036" y="483" width="1" height="22" fill="#ff0000"/>
<rect x="1044" y="483" width="1" height="22" fill="#ff0000"/>
<rect x="1052" y="483" width="1" height="22" fill="#ff0000"/>
<rect x="84" y="331" width="1" height="152" fill="#ff0000"/>
<rect x="108" y="331" width="1" height="152" fill="#ff0000"/>
<rect x="483" y="331" width="1" height="152" fill="#ff0000"/>
<rect x="645" y="331" width="1" height="152" fill="#ff0000"/>
<rect x="897" y="331" width="1" height="152" fill="#ff0000"/>
<rect x="963" y="331" width="1" height="152" fill="#ff0000"/>
<rect x="3" y="482" width="1049" height="1" fill="#808080"/>
<rect x="3" y="504" width="1049" height="1" fill="#808080"/>
<rect x="3" y="504" width="1" height="1" fill="#00c000"/>
<rect x="11" y="504" width="1" height="1" fill="#00c000"/>
<rect x="19" y="504" width="1" height="1" fill="#00c000"/>
<rect x="27" y="504" width="1" height="1" fill="#00c000"/>
<rect x="35" y="504" width="1" height="1" fill="#00c000"/>
<rect x="43" y="504" width="1" height="1" fill="#00c000"/>
<rect x="51" y="504" width="1" height="1" fill="#00c000"/>
<rect x="59" y="504" width="1" height="1" fill="#00c000"/>
<rect x="68" y="504" width="1" height="1" fill="#00c000"/>
<rect x="76" y="504" width="1" height="1" fill="#00c000"/>
<rect x="84" y="504" width="1" height="1" fill="#00c000"/>
<rect x="92" y="504" width="1" height="1" fill="#00c000"/>
<rect x="100" y="504" width="1" height="1" fill="#00c000"/>
<rect x="108" y="504" width="1" height="1" fill="#00c000"/>
<rect x="116" y="504" width="1" height="1" fill="#00c000"/>
<rect x="125" y="504" width="1" height="1" fill="#00c000"/>
<rect x="133" y="504" width="1" height="1" fill="#00c000"/>
<rect x="141" y="504" width="1" height="1" fill="#00c000"/>
<rect x="149" y="504" width="1" height="1" fill="#00c000"/>
<rect x="157" y="504" width="1" height="1" fill="#00c000"/>
<rect x="165" y="504" width="1" height="1" fill="#00c000"/>
<rect x="173" y="504" width="1" height="1" fill="#00c000"/>
<rect x="182" y="504" width="1" height="1" fill="#00c000"/>
<rect x="190" y="504" width="1" height="1" fill="#00c000"/>
<rect x="198" y="504" width="1" height="1" fill="#00c000"/>
<rect x="206" y="504" width="1" height="1" fill="#00c000"/>
<rect x="214" y="504" width="1" height="1" fill="#00c000"/>
<rect x="222" y="504" width="1" height="1" fill="#00c000"/>
<rect x="230" y="504" width="1" height="1" fill="#00c000"/>
<rect x="238" y="504" width="1" height="1" fill="#00c000"/>
<rect x="247" y="504" width="1" height="1" fill="#00c000"/>
<rect x="255" y="504" width="1" height="1" fill="#00c000"/>
<rect x="263" y="504" width="1" height="1" fill="#00c000"/>
<rect x="271" y="504" width="1" height="1" fill="#00c000"/>
<rect x="279" y="504" width="1" height="1" fill="#00c000"/>
<rect x="287" y="504" width="1" height="1" fill="#00c000"/>
<rect x="295" y="504" width="1" height="1" fill="#00c000"/>
<rect x="304" y="504" width="1" height="1" fill="#00c000"/>
<rect x="312" y="504" width="1" height="1" fill="#00c000"/>
<rect x="320" y="504" width="1" height="1" fill="#00c000"/>
<rect x="328" y="504" width="1" height="1" fill="#00c000"/>
<rect x="336" y="504" width="1" height="1" fill="#00c000"/>
<rect x="344" y="504" width="1" height="1" fill="#00c000"/>
<rect x="352" y="504" width="1" height="1" fill="#00c000"/>
<rect x="360" y="504" width="1" height="1" fill="#00c000"/>
<rect x="369" y="504" width="1" height="1" fill="#00c000"/>
<rect x="377" y="504" width="1" height="1" fill="#00c000"/>
<rect x="385" y="504" width="1" height="1" fill="#00c000"/>
<rect x="393" y="504" width="1" height="1" fill="#00c000"/>
<rect x="401" y="504" width="1" height="1" fill="#00c000"/>
<rect x="409" y="504" width="1" height="1" fill="#00c000"/>
<rect x="417" y="504" width="1" height="1" fill="#00c000"/>
<rect x="426" y="504" width="1" height="1" fill="#00c000"/>
<rect x="434" y="504" width="1" height="1" fill="#00c000"/>
<rect x="442" y="504" width="1" height="1" fill="#00c000"/>
<rect x="450" y="504" width="1" height="1" fill="#00c000"/>
<rect x="458" y="504" width="1" height="1" fill="#00c000"/>
<rect x="466" y="504" width="1" height="1" fill="#00c000"/>
<rect x="474" y="504" width="1" height="1" fill="#00c000"/>
<rect x="483" y="504" width="1" height="1" fill="#00c000"/>
<rect x="491" y="504" width="1" height="1" fill="#00c000"/>
<rect x="499" y="504" width="1" height="1" fill="#00c000"/>
<rect x="507" y="504" width="1" height="1" fill="#00c000"/>
<rect x="515" y="504" width="1" height="1" fill="#00c000"/>
<rect x="523" y="504" width="1" height="1" fill="#00c000"/>
<rect x="531" y="504" width="1" height="1" fill="#00c000"/>
<rect x="539" y="504" width="1" height="1" fill="#00c000"/>
<rect x="548" y="504" width="1" height="1" fill="#00c000"/>
<rect x="556" y="504" width="1" height="1" fill="#00c000"/>
<rect x="564" y="504" width="1" height="1" fill="#00c000"/>
<rect x="572" y="504" width="1" height="1" fill="#00c000"/>
<rect x="580" y="504" width="1" height="1" fill="#00c000"/>
<rect x="588" y="504" width="1" height="1" fill="#00c000"/>
<rect x="596" y="504" width="1" height="1" fill="#00c000"/>
<rect x="605" y="504" width="1" height="1" fill="#00c000"/>
<rect x="613" y="504" width="1" height="1" fill="#00c000"/>
<rect x="621" y="504" width="1" height="1" fill="#00c000"/>
<rect x="629" y="504" width="1" height="1" fill="#00c000"/>
<rect x="637" y="504" width="1" height="1" fill="#00c000"/>
<rect x="645" y="504" width="1" height="1" fill="#00c000"/>
<rect x="653" y="504" width="1" height="1" fill="#00c000"/>
<rect x="661" y="504" width="1" height="1" fill="#00c000"/>
<rect x="670" y="504" width="1" height="1" fill="#00c000"/>
<rect x="678" y="504" width="1" height="1" fill="#00c000"/>
<rect x="686" y="504" width="1" height="1" fill="#00c000"/>
<rect x="694" y="504" width="1" height="1" fill="#00c000"/>
<rect x="702" y="504" width="1" height="1" fill="#00c000"/>
<rect x="710" y="504" width="1" height="1" fill="#00c000"/>
<rect x="718" y="504" width="1" height="1" fill="#00c000"/>
<rect x="727" y="504" width="1" height="1" fill="#00c000"/>
<rect x="735" y="504" width="1" height="1" fill="#00c000"/>
<rect x="743" y="504" width="1" height="1" fill="#00c000"/>
<rect x="751" y="504" width="1" height="1" fill="#00c000"/>
<rect x="759" y="504" width="1" height="1" fill="#00c000"/>
<rect x="767" y="504" width="1" height="1" fill="#00c000"/>
<rect x="775" y="504" width="1" height="1" fill="#00c000"/>
<rect x="784" y="504" width="1" height="1" fill="#00c000"/>
<rect x="792" y="504" width="1" height="1" fill="#00c000"/>
<rect x="800" y="504" width="1" height="1" fill="#00c000"/>
<rect x="808" y="504" width="1" height="1" fill="#00c000"/>
<rect x="816" y="504" width="1" height="1" fill="#00c000"/>
<rect x="824" y="504" width="1" height="1" fill="#00c000"/>
<rect x="832" y="504" width="1" height="1" fill="#00c000"/>
<rect x="840" y="504" width="1" height="1" fill="#00c000"/>
<rect x="849" y="504" width="1" height="1" fill="#00c000"/>
<rect x="857" y="504" width="1" height="1" fill="#00c000"/>
<rect x="865" y="504" width="1" height="1" fill="#00c000"/>
<rect x="873" y="504" width="1" height="1" fill="#00c000"/>
<rect x="881" y="504" width="1" height="1" fill="#00c000"/>
<rect x="889" y="504" width="1" height="1" fill="#00c000"/>
<rect x="897" y="504" width="1" height="1" fill="#00c000"/>
<rect x="906" y="504" width="1" height="1" fill="#00c000"/>
<rect x="914" y="504" width="1" height="1" fill="#00c000"/>
<rect x="922" y="504" width="1" height="1" fill="#00c000"/>
<rect x="930" y="504" width="1" height="1" fill="#00c000"/>
<rect x="938" y="504" width="1" height="1" fill="#00c000"/>
<rect x="946" y="504" width="1" height="1" fill="#00c000"/>
<rect x="954" y="504" width="1" height="1" fill="#00c000"/>
<rect x="963" y="504" width="1" height="1" fill="#00c000"/>
<rect x="971" y="504" width="1" height="1" fill="#00c000"/>
<rect x="979" y="504" width="1" height="1" fill="#00c000"/>
<rect x="987" y="504" width="1" height="1" fill="#00c000"/>
<rect x="995" y="504" width="1" height="1" fill="#00c000"/>
<rect x="1003" y="504" width="1" height="1" fill="#00c000"/>
<rect x="1011" y="504" width="1" height="1" fill="#00c000"/>
<rect x="1019" y="504" width="1" height="1" fill="#00c000"/>
<rect x="1028" y="504" width="1" height="1" fill="#00c000"/>
<rect x="1036" y="504" width="1" height="1" fill="#00c000"/>
<rect x="1044" y="504" width="1" height="1" fill="#00c000"/>
<rect x="1052" y="504" width="1" height="1" fill="#00c000"/>
</g>
<polyline class="ma" stroke="#ff00ff" points="3.0,329.6 15.4,323.2 28.2,317.5 41.0,312.9 53.7,309.1 66.5,307.8 84.5,310.4 97.3,318.0 110.0,328.3 122.9,341.1 135.7,356.4 148.5,370.5 161.2,382.0 174.0,390.2 186.8,396.1 199.6,399.9 212.4,402.5 225.2,403.0 238.0,402.5 250.8,401.2 262.0,399.9 272.8,398.7 285.6,394.8 306.1,387.1 326.5,379.5 344.5,374.9 362.4,370.5 380.3,362.1 398.2,353.4 413.6,346.2 423.8,344.4 439.2,344.1 454.5,345.7 469.9,345.7 482.7,344.1 500.6,344.1 510.8,348.7 520.0,355.6 535.4,371.8 550.7,387.1 566.1,402.5 581.4,417.8 596.8,430.6 612.1,439.6 627.5,447.8 642.9,454.9 658.2,461.3 673.6,463.4 688.9,465.2 704.3,464.7 719.6,463.1 735.0,461.8 750.4,460.6 760.6,458.8 770.8,453.7 781.1,446.0 788.1,439.9 807.0,421.2 828.7,401.0 850.3,382.0 871.9,363.1 893.5,348.3 909.8,341.5 923.3,340.1 936.8,345.6 950.3,353.7 963.8,363.9 977.3,376.6 990.9,388.8 1002.8,400.0 1020.2,413.4 1036.0,422.1 1051.8,431.6"/>
<polyline class="ma" stroke="#ffff00" points="3.0,315.5 15.4,310.9 28.2,307.3 41.0,304.7 51.2,304.7 61.4,307.3 74.2,311.6 84.5,316.8 92.1,325.7 99.8,337.2 108.3,352.6 117.7,365.4 128.0,376.9 138.2,387.1 148.5,394.8 158.7,402.0 168.9,405.8 179.2,407.1 192.0,407.1 204.8,405.6 217.6,403.8 230.4,401.2 243.2,399.4 256.0,398.7 267.7,395.3 280.5,389.7 295.8,382.5 311.2,375.6 327.8,369.7 344.5,369.2 359.8,365.4 375.2,355.1 390.5,344.9 403.3,337.2 411.0,334.7 423.8,339.0 434.0,344.9 441.7,348.2 449.4,348.7 459.6,347.5 472.4,344.9 482.7,342.4 492.9,343.6 501.9,350.0 510.8,361.5 520.0,374.3 530.2,391.0 543.0,407.6 555.8,420.4 568.6,431.9 578.9,439.1 591.7,446.0 604.5,451.9 614.7,454.4 624.9,458.3 635.2,463.4 645.4,467.2 655.7,469.5 671.0,468.5 683.8,464.7 699.2,463.9 714.5,461.8 729.9,459.5 745.2,458.0 759.3,453.7 768.3,444.2 778.5,429.3 786.0,419.0 793.5,409.1 809.7,391.5 826.0,380.7 842.2,368.5 858.4,355.0 874.6,342.8 888.1,332.8 897.6,330.1 907.1,332.0 920.6,340.1 934.1,353.7 947.6,371.2 963.8,388.8 975.9,400.0 985.4,408.7 998.0,418.2 1010.7,424.5 1023.3,431.6 1039.1,439.5 1051.8,444.7"/>
<polyline class="ma" stroke="#ffffff" points="3.0,309.1 12.8,305.7 25.6,303.2 38.4,301.4 48.6,301.4 52.5,302.7 57.6,310.4 66.5,314.2 76.8,318.0 84.5,323.2 89.6,333.4 96.0,348.7 102.4,364.1 108.3,378.2 117.7,388.4 128.0,397.4 138.2,403.8 148.5,408.4 157.4,412.7 166.4,409.7 179.2,408.4 192.0,407.6 204.8,405.1 217.6,399.9 230.4,397.4 243.2,398.1 256.0,396.9 261.0,396.0 265.1,394.3 276.6,384.6 288.2,379.5 301.0,373.1 311.2,368.7 327.8,364.1 336.8,367.9 344.5,369.2 354.7,365.4 370.1,351.3 385.4,338.5 395.7,330.8 403.3,327.8 409.2,327.0 416.1,336.0 426.4,347.5 435.3,355.7 444.3,353.4 454.5,348.2 464.8,343.6 475.0,339.8 482.7,338.5 490.4,342.4 499.3,353.9 507.0,375.6 516.0,392.3 521.0,398.0 527.7,410.2 537.9,422.9 548.2,431.9 558.4,439.1 571.2,446.0 581.4,450.6 589.1,453.1 601.9,457.5 614.7,460.1 624.9,465.2 637.7,472.3 645.4,473.4 655.7,470.8 671.0,469.0 678.7,461.3 699.2,461.8 714.5,459.5 729.9,457.0 742.7,456.2 751.6,454.4 759.3,446.0 767.0,430.6 774.7,410.1 781.1,402.8 790.8,391.5 801.6,382.0 812.4,377.5 823.3,373.9 834.1,365.8 847.6,349.6 861.1,341.5 874.6,332.0 884.1,323.9 889.5,320.7 897.6,325.3 907.1,336.1 917.9,348.3 931.4,367.2 944.9,386.1 955.7,398.3 963.2,405.5 980.6,420.2 994.9,427.7 1004.3,430.0 1026.5,441.9 1037.5,445.8 1051.8,452.5"/>
<path d="M711 495 L716 501 L712 501 L712 507 L710 507 L710 501 L706 501 Z" fill="#ff0000" class="c"/>
<circle cx="7" cy="288" r="5.5" fill="#808080"/><path d="M4 286.8 L7 289.8 L10 286.8" fill="none" stroke="#101018" stroke-width="1.3"/>
<text x="17.0" y="292.2" fill="#d0d0d0" textLength="48.0" lengthAdjust="spacingAndGlyphs">独步看涨</text>
<text x="70.5" y="292.2" fill="#ff0000" textLength="85.5" lengthAdjust="spacingAndGlyphs">堪称一绝: 10.00</text>
<text x="161.5" y="292.2" fill="#00ff00" textLength="54.5" lengthAdjust="spacingAndGlyphs">持币: 0.00</text>
<text x="221.5" y="292.2" fill="#808080" textLength="66.5" lengthAdjust="spacingAndGlyphs">地狱底: 0.00</text>
<text x="293.0" y="292.2" fill="#808080" textLength="73.5" lengthAdjust="spacingAndGlyphs">地狱线: 10.00</text>
<text x="372.0" y="292.2" fill="#ff0080" textLength="74.0" lengthAdjust="spacingAndGlyphs">地平线: 20.00</text>
<text x="451.0" y="292.2" fill="#808080" textLength="74.0" lengthAdjust="spacingAndGlyphs">天际线: 80.00</text>
<text x="530.0" y="292.2" fill="#ffffff" textLength="63.0" lengthAdjust="spacingAndGlyphs">神仙: 23.29</text>
<text x="598.0" y="292.2" fill="#ffff00" textLength="61.5" lengthAdjust="spacingAndGlyphs">魔鬼: 26.95</text>
<text x="664.0" y="292.2" fill="#ff00ff" textLength="62.0" lengthAdjust="spacingAndGlyphs">轨迹: 33.27</text>
<text x="731.0" y="292.2" fill="#00ff00" textLength="66.5" lengthAdjust="spacingAndGlyphs">财神到: 0.00</text>
</svg></body></html>
